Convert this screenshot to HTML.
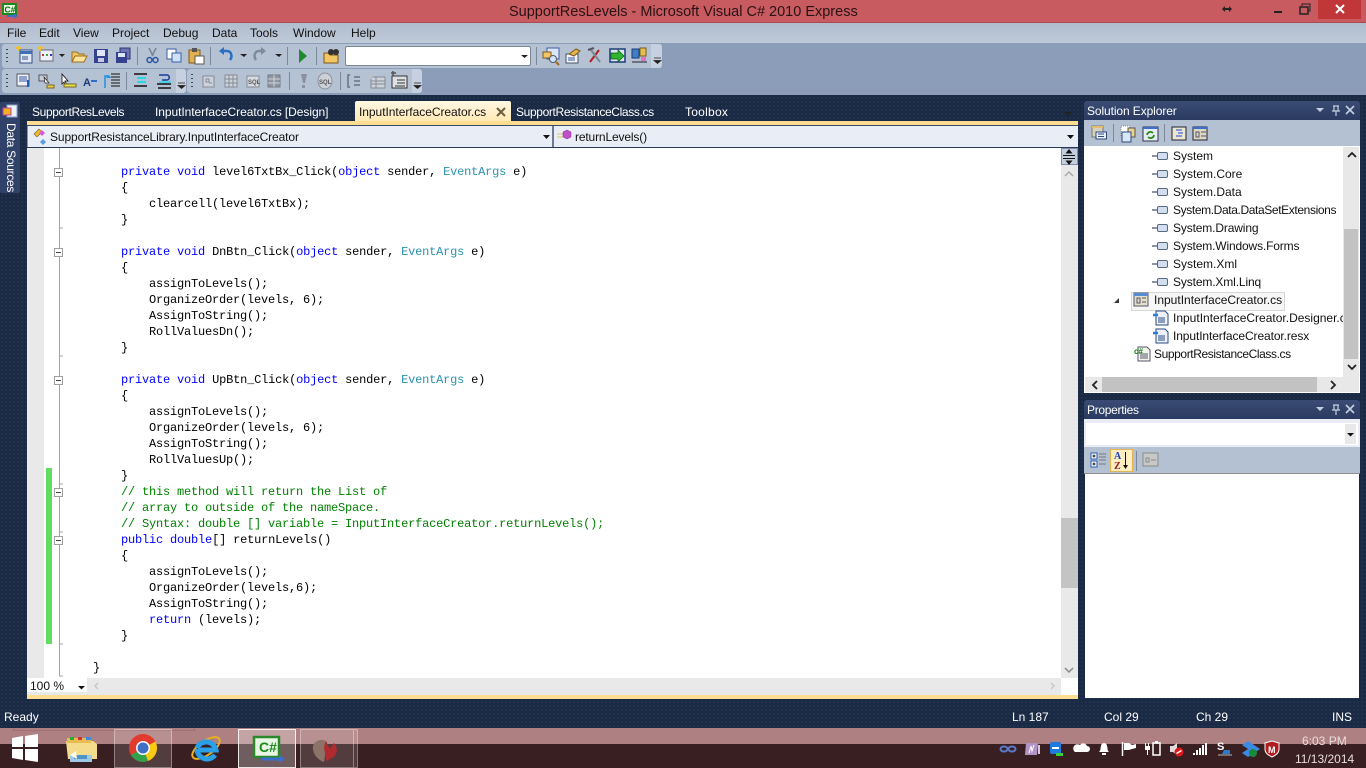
<!DOCTYPE html>
<html><head><meta charset="utf-8"><title>SupportResLevels - Microsoft Visual C# 2010 Express</title>
<style>
html,body{margin:0;padding:0;width:1366px;height:768px;overflow:hidden;background:#1b2a44}
body{position:relative;font:12px "Liberation Sans",sans-serif;color:#000;background-image:radial-gradient(#24344f 1px,transparent 1px);background-size:4px 4px}
.a{position:absolute;white-space:pre}
.b{position:absolute}
.w{color:#fff}
.m{top:26px;font-size:12px;line-height:14px;color:#111}
.tab{top:105px;line-height:14px;color:#fff}
.tree{line-height:14px;color:#111}
pre{position:absolute;left:65px;top:164px;margin:0;font:12px/16px "Liberation Mono",monospace;letter-spacing:-.2px;color:#000}
i{font-style:normal;color:#00f}
u{text-decoration:none;color:#2b91af}
em{font-style:normal;color:#008000}
svg{position:absolute;left:0;top:0}
</style></head><body>
<!-- title -->
<div class="b" style="left:0;top:0;width:1366px;height:22px;background:#c75b5f;border-bottom:1px solid #a94b50"></div>
<div class="b" style="left:1318px;top:0;width:43px;height:19px;background:#c13639"></div>
<div class="a" style="left:509px;top:3px;font-size:14.5px;line-height:18px;color:#2a1214">SupportResLevels - Microsoft Visual C# 2010 Express</div>
<!-- menu -->
<div class="b" style="left:0;top:23px;width:1366px;height:20px;background:linear-gradient(#b0bdce,#bfcad8)"></div>
<div class="b" style="left:0;top:43px;width:1366px;height:52px;background:#8b9db9"></div>
<div class="a m" style="left:7px">File</div><div class="a m" style="left:39px">Edit</div><div class="a m" style="left:73px">View</div><div class="a m" style="left:112px">Project</div><div class="a m" style="left:163px">Debug</div><div class="a m" style="left:212px">Data</div><div class="a m" style="left:250px">Tools</div><div class="a m" style="left:293px">Window</div><div class="a m" style="left:351px">Help</div>
<!-- toolbars -->
<div class="b" style="left:2px;top:44px;width:660px;height:24px;background:#b5c2d4;border-radius:3px"></div>
<div class="b" style="left:651px;top:44px;width:11px;height:24px;background:#c6d0de;border-radius:0 3px 3px 0"></div>
<div class="b" style="left:2px;top:69px;width:184px;height:24px;background:#b5c2d4;border-radius:3px"></div>
<div class="b" style="left:176px;top:69px;width:10px;height:24px;background:#c6d0de;border-radius:0 3px 3px 0"></div>
<div class="b" style="left:187px;top:69px;width:235px;height:24px;background:#b5c2d4;border-radius:3px"></div>
<div class="b" style="left:412px;top:69px;width:10px;height:24px;background:#c6d0de;border-radius:0 3px 3px 0"></div>
<div class="b" style="left:345px;top:46px;width:184px;height:18px;background:#fff;border:1px solid #7c8799;border-radius:2px"></div>
<!-- tabs -->
<div class="a tab" style="left:32px;letter-spacing:-.37px">SupportResLevels</div>
<div class="a tab" style="left:155px;letter-spacing:-.06px">InputInterfaceCreator.cs [Design]</div>
<div class="b" style="left:355px;top:101px;width:156px;height:20px;background:linear-gradient(#fff8e4,#ffe9b4);border-radius:2px 2px 0 0"></div>
<div class="a tab" style="left:359px;color:#111;letter-spacing:-.04px">InputInterfaceCreator.cs</div>
<div class="a tab" style="left:516px;letter-spacing:-.36px">SupportResistanceClass.cs</div>
<div class="a tab" style="left:685px;letter-spacing:.25px">Toolbox</div>
<div class="b" style="left:27px;top:121px;width:1051px;height:4px;background:#ffdd90"></div>
<div class="b" style="left:27px;top:125px;width:1051px;height:1px;background:#3a4966"></div>
<div class="b" style="left:28px;top:126px;width:524px;height:21px;background:#e9edf6"></div>
<div class="b" style="left:554px;top:126px;width:524px;height:21px;background:#e9edf6"></div>
<div class="b" style="left:27px;top:126px;width:1px;height:21px;background:#8b94a8"></div>
<div class="b" style="left:552px;top:126px;width:2px;height:21px;background:#6d7a92"></div>
<div class="b" style="left:27px;top:147px;width:1051px;height:1px;background:#2a3956"></div>
<div class="a" style="left:50px;top:130px;line-height:14px;color:#111;letter-spacing:-.11px">SupportResistanceLibrary.InputInterfaceCreator</div>
<div class="a" style="left:575px;top:130px;line-height:14px;color:#111;letter-spacing:-.15px">returnLevels()</div>
<!-- data sources -->
<div class="b" style="left:0;top:102px;width:20px;height:91px;background:#31426a;border-radius:2px"></div>
<div class="a" style="left:5px;top:123px;color:#fff;line-height:12px;writing-mode:vertical-rl;letter-spacing:-.3px">Data Sources</div>
<!-- editor -->
<div class="b" style="left:27px;top:148px;width:1051px;height:530px;background:#fff"></div>
<div class="b" style="left:27px;top:148px;width:17px;height:530px;background:#e9e9e9"></div>
<div class="b" style="left:46px;top:468px;width:6px;height:176px;background:#60dc60"></div>
<pre>        <i>private</i> <i>void</i> level6TxtBx_Click(<i>object</i> sender, <u>EventArgs</u> e)
        {
            clearcell(level6TxtBx);
        }

        <i>private</i> <i>void</i> DnBtn_Click(<i>object</i> sender, <u>EventArgs</u> e)
        {
            assignToLevels();
            OrganizeOrder(levels, 6);
            AssignToString();
            RollValuesDn();
        }

        <i>private</i> <i>void</i> UpBtn_Click(<i>object</i> sender, <u>EventArgs</u> e)
        {
            assignToLevels();
            OrganizeOrder(levels, 6);
            AssignToString();
            RollValuesUp();
        }
        <em>// this method will return the List of</em>
        <em>// array to outside of the nameSpace.</em>
        <em>// Syntax: double [] variable = InputInterfaceCreator.returnLevels();</em>
        <i>public</i> <i>double</i>[] returnLevels()
        {
            assignToLevels();
            OrganizeOrder(levels,6);
            AssignToString();
            <i>return</i> (levels);
        }

    }</pre>
<!-- editor scrollbars -->
<div class="b" style="left:1061px;top:165px;width:17px;height:513px;background:#e9e9e9"></div>
<div class="b" style="left:1061px;top:518px;width:17px;height:70px;background:#c4c4c4"></div>
<div class="b" style="left:1061px;top:148px;width:15px;height:15px;background:#c3cfdf;border:1px solid #7f8da6"></div>
<div class="b" style="left:27px;top:678px;width:1034px;height:17px;background:#e9e9e9"></div>
<div class="b" style="left:1061px;top:678px;width:17px;height:17px;background:#fff"></div>
<div class="b" style="left:27px;top:678px;width:60px;height:14px;background:#fff"></div>
<div class="a" style="left:30px;top:679px;line-height:14px;color:#111">100 %</div>
<div class="b" style="left:27px;top:695px;width:1051px;height:4px;background:#ffdd90"></div>
<!-- solution explorer -->
<div class="b" style="left:1084px;top:101px;width:276px;height:19px;background:linear-gradient(#3a4c75,#2a3a60);border-radius:3px 3px 0 0"></div>
<div class="a w" style="left:1087px;top:104px;line-height:14px;letter-spacing:-.1px">Solution Explorer</div>
<div class="b" style="left:1084px;top:120px;width:276px;height:26px;background:#b3c1d3"></div>
<div class="b" style="left:1084px;top:146px;width:276px;height:247px;background:#fff"></div>
<div class="b" style="left:1343px;top:147px;width:16px;height:230px;background:#e8e8e8"></div>
<div class="b" style="left:1344px;top:229px;width:14px;height:130px;background:#c2c2c2"></div>
<div class="b" style="left:1085px;top:377px;width:274px;height:15px;background:#e8e8e8"></div>
<div class="b" style="left:1102px;top:377px;width:215px;height:15px;background:#c2c2c2"></div>
<div class="a tree" style="left:1173px;top:149px">System</div>
<div class="a tree" style="left:1173px;top:167px">System.Core</div>
<div class="a tree" style="left:1173px;top:185px">System.Data</div>
<div class="a tree" style="left:1173px;top:203px;letter-spacing:-.38px">System.Data.DataSetExtensions</div>
<div class="a tree" style="left:1173px;top:221px;letter-spacing:-.14px">System.Drawing</div>
<div class="a tree" style="left:1173px;top:239px;letter-spacing:-.15px">System.Windows.Forms</div>
<div class="a tree" style="left:1173px;top:257px">System.Xml</div>
<div class="a tree" style="left:1173px;top:275px;letter-spacing:-.13px">System.Xml.Linq</div>
<div class="b" style="left:1131px;top:292px;width:152px;height:17px;background:#f6f6f6;border:1px solid #d6d6d6"></div>
<div class="a tree" style="left:1154px;top:293px">InputInterfaceCreator.cs</div>
<div class="a tree" style="left:1173px;top:311px;width:170px;overflow:hidden">InputInterfaceCreator.Designer.cs</div>
<div class="a tree" style="left:1173px;top:329px;letter-spacing:-.1px">InputInterfaceCreator.resx</div>
<div class="a tree" style="left:1154px;top:347px;letter-spacing:-.4px">SupportResistanceClass.cs</div>
<!-- properties -->
<div class="b" style="left:1084px;top:400px;width:276px;height:19px;background:linear-gradient(#3a4c75,#2a3a60);border-radius:3px 3px 0 0"></div>
<div class="a w" style="left:1087px;top:403px;line-height:14px;letter-spacing:-.3px">Properties</div>
<div class="b" style="left:1084px;top:419px;width:276px;height:28px;background:#e9edf3"></div>
<div class="b" style="left:1086px;top:423px;width:272px;height:22px;background:#fff"></div>
<div class="b" style="left:1345px;top:424px;width:11px;height:20px;background:#e8e8e8"></div>
<div class="b" style="left:1084px;top:447px;width:276px;height:26px;background:#b3c1d3"></div>
<div class="b" style="left:1084px;top:473px;width:276px;height:1px;background:#8e8e8e"></div>
<div class="b" style="left:1085px;top:474px;width:274px;height:224px;background:#fff"></div>
<div class="b" style="left:1110px;top:449px;width:21px;height:21px;background:#ffeec2;border:1px solid #e5b44f"></div>
<!-- status -->
<div class="a w" style="left:4px;top:710px;line-height:14px">Ready</div>
<div class="a w" style="left:1012px;top:710px;line-height:14px">Ln 187</div>
<div class="a w" style="left:1104px;top:710px;line-height:14px">Col 29</div>
<div class="a w" style="left:1196px;top:710px;line-height:14px">Ch 29</div>
<div class="a w" style="left:1332px;top:710px;line-height:14px">INS</div>
<!-- taskbar -->
<div class="b" style="left:0;top:728px;width:1366px;height:16px;background:#ae8082"></div>
<div class="b" style="left:0;top:744px;width:1366px;height:24px;background:#3a1f22"></div>
<div class="b" style="left:13px;top:728px;width:180px;height:2px;border:1px solid #a07274;border-top:0"></div>
<div class="b" style="left:114px;top:729px;width:56px;height:37px;background:rgba(255,255,255,.13);border:1px solid rgba(255,255,255,.35)"></div>
<div class="b" style="left:238px;top:729px;width:56px;height:37px;background:rgba(255,255,255,.28);border:1px solid rgba(255,255,255,.85)"></div>
<div class="b" style="left:300px;top:729px;width:52px;height:37px;background:rgba(255,255,255,.13);border:1px solid rgba(255,255,255,.35)"></div>
<div class="b" style="left:354px;top:729px;width:3px;height:37px;background:rgba(255,255,255,.13);border:1px solid rgba(255,255,255,.3);border-left:0"></div>
<div class="a" style="left:1302px;top:734px;line-height:14px;color:#e8dcdc">6:03 PM</div>
<div class="a" style="left:1295px;top:752px;line-height:14px;color:#e8dcdc">11/13/2014</div>

<svg width="1366" height="768" viewBox="0 0 1366 768" fill="none">
<!-- outline gutter -->
<path d="M59.5 148V676H63M59.5 228H63M59.5 356H63M59.5 484H63M59.5 532H63M59.5 644H63" stroke="#a5a5a5"/>
<g fill="#fff" stroke="#a0a0a0"><rect x="54.5" y="168.5" width="8" height="8"/><rect x="54.5" y="248.5" width="8" height="8"/><rect x="54.5" y="376.5" width="8" height="8"/><rect x="54.5" y="488.5" width="8" height="8"/><rect x="54.5" y="536.5" width="8" height="8"/></g>
<path d="M56 172.5h5M56 252.5h5M56 380.5h5M56 492.5h5M56 540.5h5" stroke="#444"/>
<!-- title icon -->
<rect x="3" y="4" width="13" height="10" fill="#eafbe6" stroke="#1c8a1c" stroke-width="2"/><text x="4.500" y="12.500" font-family="Liberation Sans" font-size="8.500" font-weight="bold" fill="#0a6a0a">C#</text><path d="M7 16h8" stroke="#3a6fd0" stroke-width="2"/><path d="M14 13.500l4 2.500-4 2.500z" fill="#3a6fd0"/>
<path d="M1223 9h8" stroke="#222" stroke-width="2"/><path d="M1222 9l3-3v6zM1232 9l-3-3v6z" fill="#222"/>
<path d="M1274 12h8" stroke="#222" stroke-width="2"/>
<rect x="1300" y="7" width="8" height="7" stroke="#222" stroke-width="1.5"/><path d="M1302 6V4h8v7h-2" stroke="#222"/>
<path d="M1336 5l8 8M1344 5l-8 8" stroke="#fff" stroke-width="2"/>
<!-- grips -->
<path d="M7 49v1M7 53v1M7 57v1M7 61v1M7 74v1M7 78v1M7 82v1M7 86v1M192 74v1M192 78v1M192 82v1M192 86v1" stroke="#3a465c" stroke-width="2"/>
<!-- seps -->
<path d="M137.5 47v18M210.5 47v18M287.5 47v18M316.5 47v18M536.5 47v18M126.5 72v18M289.5 72v18M340.5 72v18" stroke="#7c8899"/>
<!-- toolbar 1 -->
<g>
<rect x="20" y="50" width="12" height="13" fill="#dfe8f4" stroke="#35527f"/><path d="M20 51h12v3H20z" fill="#3f6fb5"/><path d="M22 57h6M22 59h6" stroke="#35527f"/><path d="M16 48l5 0M18 46v5" stroke="#f0c030" stroke-width="2"/>
<rect x="40" y="50" width="13" height="11" fill="#eef1f6" stroke="#667"/><path d="M42 54h2v2h-2z" fill="#c33"/><path d="M46 54h2v2h-2z" fill="#3a3"/><path d="M50 54h2v2h-2z" fill="#33c"/><path d="M38 48h5M40 46v5" stroke="#f0c030" stroke-width="2"/>
<path d="M59 54h6l-3 3zM240 54h7l-3 3zM275 54h7l-3 3zM1064 112h8l-4 4z" fill="#222"/>
<path d="M72 62V52h5l2 2h5v8z" fill="#f2c763" stroke="#9a6f1e"/><path d="M72 62l3-6h12l-3 6z" fill="#ffe59a" stroke="#9a6f1e"/>
<rect x="94" y="49" width="14" height="14" fill="#34428f"/><rect x="97" y="50" width="8" height="6" fill="#dfe6f7"/><rect x="98" y="58" width="6" height="4" fill="#c4cbe2"/>
<rect x="120" y="48" width="10" height="11" fill="#6d75b3" stroke="#2b3575"/><rect x="116" y="52" width="11" height="11" fill="#34428f"/><rect x="118" y="53" width="7" height="4" fill="#dfe6f7"/>
<path d="M149 48l4 8M156 48l-4 8" stroke="#7a8490" stroke-width="1.5"/><circle cx="149.500" cy="60" r="2.500" stroke="#2a57a6" stroke-width="1.500"/><circle cx="155.500" cy="60" r="2.500" stroke="#2a57a6" stroke-width="1.500"/>
<rect x="167" y="49" width="9" height="10" fill="#fff" stroke="#3a5fa5"/><rect x="172" y="53" width="9" height="9" fill="#cfe0f7" stroke="#3a5fa5"/>
<rect x="189" y="50" width="11" height="13" fill="#e3b04b" stroke="#7a5a1c"/><rect x="192" y="48" width="5" height="4" fill="#555"/><rect x="195" y="56" width="9" height="8" fill="#fff" stroke="#555"/>
<path d="M230 60c3-4 1-9-3-9h-5" stroke="#2a6fc4" stroke-width="2.500"/><path d="M219 51l5-4v8z" fill="#2a6fc4"/>
<path d="M256 60c-3-4-1-9 3-9h4" stroke="#7f8b9a" stroke-width="2.500"/><path d="M266 51l-5-4v8z" fill="#7f8b9a"/>
<path d="M299 49l8 7-8 7z" fill="#1f8a2e"/>
<path d="M324 63V53h4l2 2h8v8z" fill="#f2c763" stroke="#7a5a1c"/><circle cx="331" cy="52" r="3" fill="#333"/><circle cx="336" cy="52" r="3" fill="#333"/>
<path d="M521 55h7l-3.500 3z" fill="#222"/>
<rect x="547" y="48" width="12" height="11" fill="#dbe6f5" stroke="#3a5fa5"/><path d="M543 52h8v6h-8z" fill="#f2c763" stroke="#7a5a1c"/><circle cx="553" cy="59" r="3.500" fill="#cfe6ff" stroke="#556"/><path d="M556 62l3 3" stroke="#a06a1c" stroke-width="2"/>
<rect x="566" y="54" width="12" height="9" fill="#f4f4f4" stroke="#456"/><path d="M569 54l7-5 4 2-6 5z" fill="#e5b44f" stroke="#7a5a1c"/><path d="M568 58h7M568 60h7" stroke="#35a"/>
<path d="M590 62l9-12" stroke="#b02020" stroke-width="2"/><path d="M600 62l-9-12" stroke="#7d8794" stroke-width="2"/><path d="M588 50l6-2" stroke="#556" stroke-width="2"/>
<rect x="610" y="49" width="15" height="13" fill="#dbe6f5" stroke="#1b3a7a" stroke-width="1.500"/><path d="M611 53h7v-3l6 6-6 6v-3h-7z" fill="#2fb52f" stroke="#0b5a0b" stroke-width=".7"/>
<rect x="632" y="49" width="7" height="9" fill="#3f7fc4" stroke="#1b3a7a"/><rect x="640" y="48" width="6" height="8" fill="#e5c04f" stroke="#7a5a1c"/><rect x="641" y="57" width="5" height="4" fill="#e070c0"/><path d="M632 62h15" stroke="#556" stroke-width="1.500"/>
<path d="M654 58h7M654 60.500h7l-3.500 3z" fill="#222" stroke="#222" stroke-width=".8"/>
</g>
<!-- toolbar 2 -->
<g>
<rect x="17" y="74" width="12" height="12" fill="#eef1f6" stroke="#556"/><path d="M19 77h8M19 79h8M19 81h8" stroke="#35a"/><path d="M28 80v7" stroke="#1f5fb5" stroke-width="2"/>
<rect x="39" y="75" width="8" height="6" fill="#c8cdd6" stroke="#556"/><path d="M44 77l5 6-4 0z" fill="#fff" stroke="#222" stroke-width=".7"/><rect x="47" y="85" width="7" height="3" fill="#e8cc50" stroke="#7a6a1c"/>
<path d="M62 74v10l2-2 2 4 1-1-2-4h3z" fill="#fff" stroke="#111" stroke-width=".8"/><rect x="64" y="84" width="12" height="3" fill="#e8e050" stroke="#7a6a1c"/>
<text x="83" y="86" font-family="Liberation Sans" font-size="11" font-weight="bold" fill="#1b3a7a">A</text><path d="M91 81h6" stroke="#2a6fc4" stroke-width="2"/>
<path d="M105 88V76h4" stroke="#1f8fe0" stroke-width="1.500"/><path d="M111 74h9M111 77h9M111 80h9M111 83h9M111 86h9" stroke="#111"/><path d="M106 78l3-3 2 3z" fill="#1f8fe0"/>
<path d="M134 74h13M134 86h13" stroke="#111" stroke-width="1.500"/><path d="M137 78h9M137 82h9" stroke="#25d8e8" stroke-width="2"/>
<path d="M157 84h14M158 88h13" stroke="#111" stroke-width="1.500"/><path d="M159 75h8c3 0 3 5 0 5h-5" stroke="#1b3a9a" stroke-width="1.500"/><path d="M159 82h12" stroke="#25d8e8" stroke-width="1.500"/>
<path d="M178 83h7M178 85.500h7l-3.500 3z" fill="#222" stroke="#222" stroke-width=".8"/>
<rect x="203" y="76" width="11" height="11" fill="#cfd3d9" stroke="#838b96"/><path d="M206 79h3v3h-3zM209 83h3" stroke="#838b96"/>
<rect x="225" y="75" width="12" height="12" fill="#cfd3d9" stroke="#838b96"/><path d="M225 79h12M225 83h12M229 75v12M233 75v12" stroke="#838b96"/>
<rect x="247" y="76" width="12" height="11" fill="#d8dbe0" stroke="#838b96"/><text x="248" y="84" font-family="Liberation Sans" font-size="6" font-weight="bold" fill="#555">SQL</text>
<rect x="268" y="75" width="12" height="12" fill="#8f96a1" stroke="#737a85"/><path d="M268 79h12M268 83h12M274 75v12" stroke="#cfd3d9"/>
<path d="M301 74h6l-2 9h-2zM302 85h3v3h-3z" fill="#8b929c"/>
<ellipse cx="325" cy="81" rx="7" ry="8" fill="#cdd1d7" stroke="#8b929c"/><text x="319" y="84" font-family="Liberation Sans" font-size="6" font-weight="bold" fill="#555">SQL</text>
<path d="M350 75h-2v12h2M354 77h6M354 81h6M354 85h6" stroke="#6b727c" stroke-width="1.500"/>
<rect x="371" y="77" width="14" height="11" fill="#cfd3d9" stroke="#838b96"/><path d="M371 81h14M371 84h14M376 77v11" stroke="#838b96"/><path d="M369 76h5M371 74v5" stroke="#bfc3c9" stroke-width="1.500"/>
<rect x="392" y="76" width="15" height="12" fill="#dde0e5" stroke="#333"/><path d="M397 80h8M397 83h8M395 86h10" stroke="#333"/><path d="M391 73h5M393 71v5" stroke="#555" stroke-width="1.500"/>
<path d="M414 83h7M414 85.500h7l-3.500 3z" fill="#222" stroke="#222" stroke-width=".8"/>
</g>
<!-- data sources icon -->
<rect x="7" y="105" width="10" height="12" fill="#eef2fb" stroke="#8ba0c8"/><rect x="3" y="108" width="8" height="7" fill="#f0b020" stroke="#c040a0"/>
<!-- tab close / combo -->
<path d="M497 108l8 8M505 108l-8 8" stroke="#6e5e3e" stroke-width="2"/>
<path d="M34 134l5-5 3 3-5 5z" fill="#e8bc2e" stroke="#7a5a1c" stroke-width=".6"/><path d="M42 130l3 3-3 3-3-3z" fill="#d85ad0"/><path d="M43 139l3 3-3 3-3-3z" fill="#5a9ae0"/>
<path d="M543 135h7l-3.500 4zM1067 135h7l-3.500 4z" fill="#111"/>
<path d="M557 134h6M557 137h6" stroke="#d8c860"/><path d="M567 130l4 2v5l-4 2-4-2v-5z" fill="#c050c8" stroke="#8a2a90" stroke-width=".5"/>
<path d="M78 686h7l-3.500 3.500z" fill="#111"/>
<path d="M98 683l-3 3 3 3" stroke="#c8c8c8" stroke-width="1.500"/><path d="M1051 683l3 3-3 3" stroke="#c8c8c8" stroke-width="1.500"/>
<!-- splitter and arrows -->
<path d="M1063 155.500h12M1063 158.500h12" stroke="#111"/><path d="M1069 149l-3.500 4.500h7zM1069 165l-3.500-4.500h7z" fill="#111"/>
<path d="M1065 176l4-4 4 4" stroke="#a8a8a8" stroke-width="1.500"/><path d="M1065 668l4 4 4-4" stroke="#888" stroke-width="1.500"/>
<!-- solution explorer chrome -->
<path d="M1316 108h8l-4 4z" fill="#c5cfdf"/><path d="M1333 106h6M1334 106v5h4v-5M1332 111h8M1336 111v5" stroke="#c5cfdf" stroke-width="1.200"/><path d="M1346 106l8 8M1354 106l-8 8" stroke="#c5cfdf" stroke-width="1.600"/>
<path d="M1316 407h8l-4 4z" fill="#c5cfdf"/><path d="M1333 405h6M1334 405v5h4v-5M1332 410h8M1336 410v5" stroke="#c5cfdf" stroke-width="1.200"/><path d="M1346 405l8 8M1354 405l-8 8" stroke="#c5cfdf" stroke-width="1.600"/>
<rect x="1092" y="126" width="11" height="11" fill="#d8d2bc" stroke="#777"/><rect x="1092" y="126" width="11" height="2" fill="#e0c070"/><rect x="1096" y="132" width="10.500" height="7" fill="#eef1f6" stroke="#2a4a80"/><path d="M1098 134h6M1098 136.500h6" stroke="#2a4a80"/>
<path d="M1113.500 124v18M1164.500 124v18" stroke="#7c8899"/>
<rect x="1121" y="126" width="9" height="10" fill="#fff" stroke="#888" stroke-dasharray="1 1"/><rect x="1128" y="128" width="7" height="9" fill="#ecd28a" stroke="#555"/><rect x="1122" y="132" width="9" height="10" fill="#dbe6f5" stroke="#2a4a80"/>
<rect x="1143" y="127" width="15" height="14" fill="#e6edf7" stroke="#334"/><rect x="1143" y="127" width="15" height="2" fill="#3a6fd0"/><path d="M1147 135a3.500 3.500 0 0 1 6-2M1154 135a3.500 3.500 0 0 1-6 2" stroke="#2a8a10" stroke-width="1.800"/>
<rect x="1172" y="127" width="14" height="13" fill="#ece8d0" stroke="#223"/><path d="M1176 130h6M1178 133h5M1176 136h6" stroke="#1a40e0"/>
<rect x="1193" y="127" width="14" height="13" fill="#ddd8c4" stroke="#223"/><rect x="1193" y="127" width="14" height="2" fill="#3a6fd0"/><path d="M1196 132h3v5h-3zM1201 132h5M1201 136h5" stroke="#556"/>
<path d="M1348 157l4-4 4 4" stroke="#222" stroke-width="1.800"/><path d="M1348 365l4 4 4-4" stroke="#222" stroke-width="1.800"/>
<path d="M1097 381l-4 4 4 4M1331 381l4 4-4 4" stroke="#222" stroke-width="1.800"/>
<path d="M1347 433h7l-3.500 3.500z" fill="#111"/>
<!-- refs icons -->
<g fill="#d3dff0" stroke="#5a6880"><rect x="1157.500" y="152.500" width="10" height="7" rx="1.500"/><rect x="1157.500" y="170.500" width="10" height="7" rx="1.500"/><rect x="1157.500" y="188.500" width="10" height="7" rx="1.500"/><rect x="1157.500" y="206.500" width="10" height="7" rx="1.500"/><rect x="1157.500" y="224.500" width="10" height="7" rx="1.500"/><rect x="1157.500" y="242.500" width="10" height="7" rx="1.500"/><rect x="1157.500" y="260.500" width="10" height="7" rx="1.500"/><rect x="1157.500" y="278.500" width="10" height="7" rx="1.500"/></g>
<path d="M1152 156h5M1152 174h5M1152 192h5M1152 210h5M1152 228h5M1152 246h5M1152 264h5M1152 282h5" stroke="#8a94a6" stroke-width="2"/>
<path d="M1114 303h5v-5z" fill="#333"/>
<rect x="1134" y="293" width="14" height="13" fill="#e4e0cc" stroke="#556"/><rect x="1134" y="293" width="14" height="3" fill="#5a8ad0"/><path d="M1137 298h3v5h-3zM1142 298h4M1142 302h4" stroke="#556"/>
<g fill="#eef3fb" stroke="#2a4a80"><path d="M1156 311h9l3 3v11h-12zM1156 329h9l3 3v11h-12z"/></g><path d="M1158 318h7M1158 320h7M1158 322h7M1158 336h7M1158 338h7M1158 340h7" stroke="#2a4a80"/><path d="M1153 315h5M1153 333h5" stroke="#2a7ae0" stroke-width="2.500"/>
<path d="M1138 347h9l3 3v11h-12z" fill="#f4f6f0" stroke="#556"/><path d="M1140 354h8M1140 356h8M1140 358h8" stroke="#556"/><text x="1134" y="354" font-family="Liberation Sans" font-size="8" font-weight="bold" fill="#0a8a0a">c#</text>
<!-- properties toolbar -->
<rect x="1091" y="453" width="6" height="6" fill="#fff" stroke="#2a5ab0"/><rect x="1091" y="461" width="6" height="6" fill="#fff" stroke="#2a5ab0"/><path d="M1092.500 456h3M1092.500 464h3M1094 454.500v3M1094 462.500v3" stroke="#111"/><path d="M1099 454h7M1099 457h7M1099 460h7M1099 464h7" stroke="#777"/>
<text x="1114" y="459" font-family="Liberation Serif" font-size="10" font-weight="bold" fill="#1a3ac0">A</text><text x="1114" y="469" font-family="Liberation Serif" font-size="10" font-weight="bold" fill="#9a1c1c">Z</text><path d="M1125.500 452v14" stroke="#111"/><path d="M1123 465h5l-2.500 4z" fill="#111"/>
<path d="M1136.500 451v20" stroke="#7c8899"/>
<rect x="1143" y="453" width="15" height="13" fill="#c8c8c8" stroke="#8a8a8a"/><path d="M1146 458h3v4h-3zM1151 460h5" stroke="#8a8a8a"/>
<!-- taskbar icons -->
<path d="M12 738l11-2v11H12zM25 736l13-2v13H25zM12 749h11v11l-11-2zM25 749h13v13l-13-2z" fill="#fff"/>
<path d="M66 741h27l4 3v15H68z" fill="#f4dc8c"/><path d="M67 738h24v5H67z" fill="#e8bc50"/><path d="M70 737h4v3h-4z" fill="#2fa83a"/><path d="M78 737h4v3h-4z" fill="#d03030"/><path d="M86 737h5v3h-5z" fill="#3a8ae0"/><path d="M70 755h22v7H70z" fill="#9fc8e4"/><path d="M74 755h13v4H74z" fill="#4f94c8"/><path d="M70 755l6-4 1 8z" fill="#ffffe8"/>
<circle cx="143" cy="748" r="14" fill="#e23b2e"/><path d="M143 748l12.500-6.500A14 14 0 0 1 148 761z" fill="#f6c912"/><path d="M143 748l5 13A14 14 0 0 1 131 755z" fill="#33a04c"/><circle cx="143" cy="748" r="7" fill="#fff"/><circle cx="143" cy="748" r="5.500" fill="#3f6fc6"/>
<ellipse cx="206" cy="748" rx="16" ry="7" transform="rotate(-35 206 748)" stroke="#e8b020" stroke-width="2"/><path d="M197 748a10 10 0 0 1 19 2H198M215 755a10 10 0 0 1-18-6" stroke="#2aa0e8" stroke-width="5"/>
<rect x="254" y="737" width="25" height="20" fill="#e8f6e4" stroke="#2a8a2a" stroke-width="2.500"/><text x="259" y="752" font-family="Liberation Sans" font-size="14" font-weight="bold" fill="#1a8a1a">C#</text><path d="M262 759h18" stroke="#3a6fd0" stroke-width="3"/><path d="M279 755l6 4-6 4z" fill="#3a6fd0"/>
<path d="M313 746c2-6 10-8 14-4l-3 20c-6-2-12-8-11-16z" fill="#8d7268"/><path d="M326 741l4 8 4-6c4 4 4 12-2 15l-6 3-2-14z" fill="#b02a30"/>
<!-- tray -->
<g transform="translate(1000 742)"><ellipse cx="4" cy="7" rx="3.500" ry="2.500" stroke="#5a7ac8" stroke-width="2"/><ellipse cx="12" cy="7" rx="3.500" ry="2.500" stroke="#5a7ac8" stroke-width="2"/></g>
<path d="M1026 743h12l-1 12h-12z" fill="#b294c4"/><path d="M1038 745h2v9h-2z" fill="#d8c8e0"/><path d="M1029 753l2-7 1 5 2-6" stroke="#fff"/>
<rect x="1050" y="742" width="11" height="12" rx="2" fill="#1f7ae0"/><path d="M1052 748h7" stroke="#fff" stroke-width="2"/><rect x="1056" y="753" width="7" height="3" fill="#3ad03a"/>
<path d="M1075 752h12a3 3 0 0 0 0-6 4 4 0 0 0-7-1 3.500 3.500 0 0 0-5 7z" fill="#fff"/>
<path d="M1099 752h10c-2-2-1-3-2-6a3 3 0 0 0-6 0c-1 3 0 4-2 6zM1102 753h4v2h-4z" fill="#fff"/>
<path d="M1122.500 742v14" stroke="#fff" stroke-width="1.500"/><path d="M1124 743h5l3 2 4-1v4l-4 1-3 1h-5z" fill="#fff"/>
<path d="M1145 743h1v3h2v-3h1v3h1v4h-2v5h-1v-5h-2z" fill="#fff"/><rect x="1153" y="743" width="7" height="12" stroke="#fff" stroke-width="1.500"/><rect x="1155" y="741" width="3" height="2" fill="#fff"/>
<path d="M1170 746h3l4-3v12l-4-3h-3z" fill="#ddd"/><circle cx="1179" cy="752" r="4.500" fill="#e01818"/><path d="M1176.500 753.500l5-3" stroke="#fff" stroke-width="1.500"/>
<path d="M1193 753h2v2h-2zM1196 750h2v5h-2zM1199 748h2v7h-2zM1202 745h2v10h-2zM1205 743h2v12h-2z" fill="#fff"/>
<text x="1217" y="750" font-family="Liberation Sans" font-size="11" font-weight="bold" fill="#fff">S</text><path d="M1222 754l2-4h6v4z" fill="#2a7ac8"/><path d="M1218 755h14" stroke="#bbb"/>
<path d="M1242 745l6-4 6 4-6 4zM1254 745l6 4-6 4-6-4zM1242 753l6-4 6 4-6 4z" fill="#3a8ae4"/><circle cx="1253" cy="753" r="4" fill="#1a8a3a"/>
<path d="M1265 743l7-2 7 2v6c0 4-3 6-7 8-4-2-7-4-7-8z" fill="#b01c20" stroke="#fff"/><text x="1268" y="753" font-family="Liberation Sans" font-size="9" font-weight="bold" fill="#fff">M</text>
</svg>
</body></html>
